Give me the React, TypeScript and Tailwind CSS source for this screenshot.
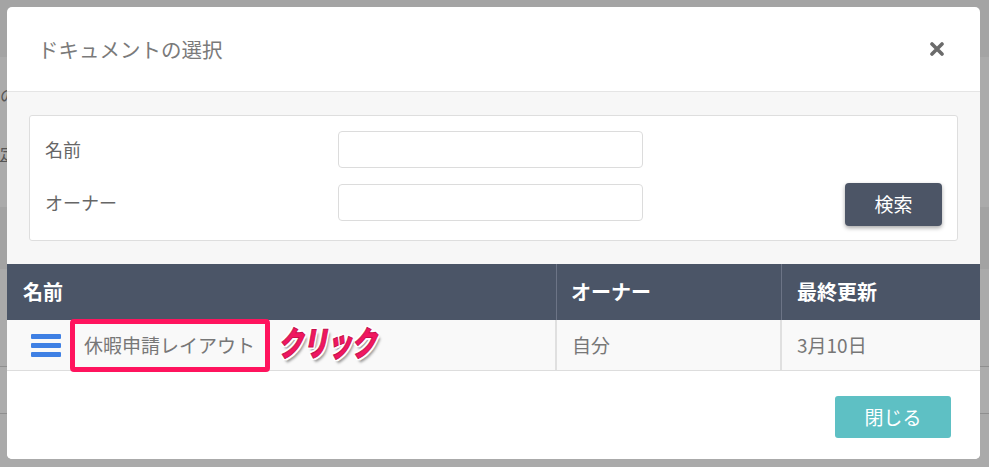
import React from 'react';

const font = { fontFamily: '"Noto Sans CJK JP", "Noto Sans", sans-serif' };

function HamburgerIcon() {
  return (
    <svg width="30" height="23" viewBox="0 0 30 23" className="shrink-0">
      <rect x="0" y="0" width="30" height="5" rx="1" fill="#3f80e4" />
      <rect x="0" y="9" width="30" height="5" rx="1" fill="#3f80e4" />
      <rect x="0" y="18" width="30" height="5" rx="1" fill="#3f80e4" />
    </svg>
  );
}

function CloseIcon() {
  return (
    <svg width="14" height="14" viewBox="0 0 14 14">
      <path d="M2 2 L12 12 M12 2 L2 12" stroke="#6b6b6b" strokeWidth="3.6" strokeLinecap="round" />
    </svg>
  );
}

export default function App() {
  return (
    <div className="relative w-[989px] h-[467px] overflow-hidden bg-[#a9a9a9]" style={font}>
      {/* page behind the overlay */}
      <div className="absolute inset-0 flex flex-col">
        <div className="h-[57px] bg-[#a4a4a4]" />
        <div className="h-[150px] bg-[#ababab] text-[16px] text-[#555] leading-none">
          <div className="mt-[30px]">の</div>
          <div className="mt-[42px] underline">定</div>
        </div>
        <div className="h-[62px] bg-[#a3a3a3]" />
        <div className="h-[98px] bg-[#aaaaaa] border-b border-[#8f8f8f]" />
        <div className="h-[47px] bg-[#acacac] border-b border-[#8f8f8f]" />
        <div className="flex-1 bg-[#aaaaaa]" />
      </div>

      {/* modal */}
      <div className="absolute left-[7px] top-[7px] w-[973px] h-[452px] bg-white rounded-[5px] overflow-hidden flex flex-col">
        <div className="h-[85px] shrink-0 flex items-center justify-between pl-[31px] pr-[36px] border-b border-[#e5e5e5]">
          <h2 className="text-[20.5px] text-[#7a7a7a] font-normal">ドキュメントの選択</h2>
          <CloseIcon />
        </div>

        <div className="bg-[#f7f7f7] pt-[23px] flex flex-col">
          <div className="mx-[22px] h-[126px] bg-white border border-[#dedede] rounded-[3px] flex items-end justify-between pl-[15px] pr-[15px] pt-[15px] pb-[14px]">
            <div className="flex flex-col gap-[16px] self-start">
              <div className="flex items-center">
                <span className="w-[293px] text-[18px] text-[#666]">名前</span>
                <input className="w-[305px] h-[37px] bg-white border border-[#dcdcdc] rounded-[4px] outline-none" />
              </div>
              <div className="flex items-center">
                <span className="w-[293px] text-[18px] text-[#666]">オーナー</span>
                <input className="w-[305px] h-[37px] bg-white border border-[#dcdcdc] rounded-[4px] outline-none" />
              </div>
            </div>
            <button className="w-[97px] h-[43px] bg-[#4c5566] text-white text-[19px] rounded-[4px] shadow-[0_2px_4px_rgba(0,0,0,0.35)]">
              検索
            </button>
          </div>

          <div className="mt-[23px]">
            <div className="flex h-[56px] bg-[#4b5567] text-white text-[20px] font-bold">
              <div className="w-[550px] flex items-center pl-[16px] border-r border-[#6c7486]">名前</div>
              <div className="w-[225px] flex items-center pl-[14px] border-r border-[#6c7486]">オーナー</div>
              <div className="flex-1 flex items-center pl-[15px]">最終更新</div>
            </div>
            <div className="relative flex h-[51px] bg-[#f9f9f9] border-b border-[#dddddd] text-[19px] text-[#777]">
              <div className="w-[550px] flex items-center pl-[24px] border-r-2 border-[#e0e0e0]">
                <HamburgerIcon />
                <span className="ml-[23px]">休暇申請レイアウト</span>
              </div>
              <div className="w-[225px] flex items-center pl-[15px] border-r-2 border-[#e0e0e0]">自分</div>
              <div className="flex-1 flex items-center pl-[15px]">3月10日</div>

              {/* annotation */}
              <div className="absolute left-[63px] top-[-1px] w-[200px] h-[53px] border-[5px] border-[#ff145e] rounded-[4px]" />
              <span className="absolute left-[271px] top-[0px] inline-block origin-left scale-x-[0.74] text-[34px] leading-[44px] font-black italic tracking-[-1px] text-[#f01760] [-webkit-text-stroke:1px_#c8104c] [text-shadow:-2px_-2px_0_#fff,2px_-2px_0_#fff,-2px_2px_0_#fff,2px_2px_0_#fff,0_-2px_0_#fff,0_2px_0_#fff,-2px_0_0_#fff,2px_0_0_#fff,3px_4px_3px_rgba(0,0,0,0.4)]">
                クリック
              </span>
            </div>
          </div>
        </div>

        <div className="flex-1 bg-white flex justify-end items-start pt-[25px] pr-[29px]">
          <button className="w-[116px] h-[42px] bg-[#5ec0c4] text-white text-[19px] rounded-[3px]">閉じる</button>
        </div>
      </div>
    </div>
  );
}
